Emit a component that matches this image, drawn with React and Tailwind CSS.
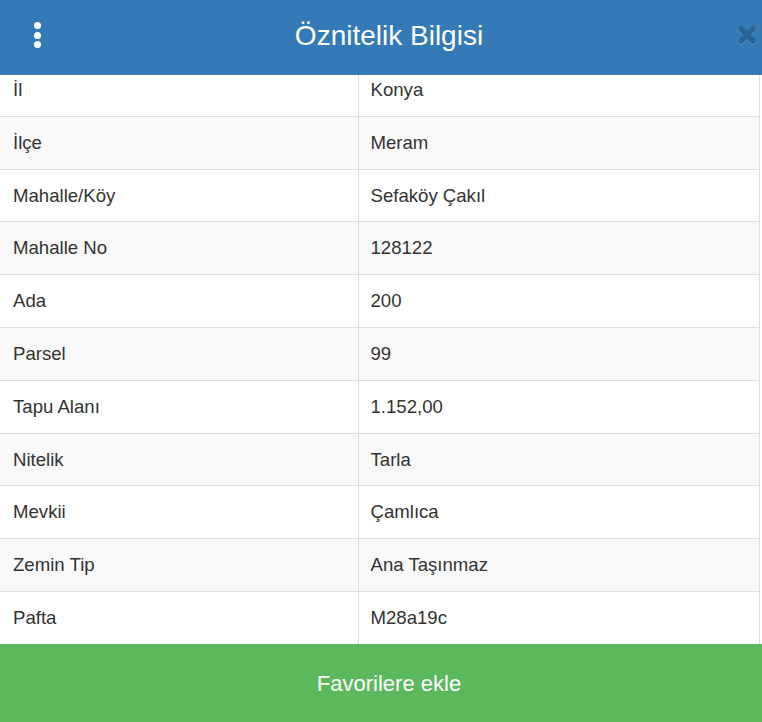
import React from 'react';

const rows = [
  ['İl', 'Konya'],
  ['İlçe', 'Meram'],
  ['Mahalle/Köy', 'Sefaköy Çakıl'],
  ['Mahalle No', '128122'],
  ['Ada', '200'],
  ['Parsel', '99'],
  ['Tapu Alanı', '1.152,00'],
  ['Nitelik', 'Tarla'],
  ['Mevkii', 'Çamlıca'],
  ['Zemin Tip', 'Ana Taşınmaz'],
  ['Pafta', 'M28a19c'],
];

const App = () => {
  return (
    <div className="w-[762px] h-[722px] flex flex-col bg-white text-[#333] font-['Liberation_Sans',Arial,sans-serif] overflow-hidden">
      <header className="relative h-[75px] shrink-0 bg-[#337ab7] flex items-center justify-center">
        <button className="absolute left-[34px] top-[22px] flex flex-col gap-[2.5px]">
          <span className="block w-[7px] h-[7px] rounded-full bg-white" />
          <span className="block w-[7px] h-[7px] rounded-full bg-white" />
          <span className="block w-[7px] h-[7px] rounded-full bg-white" />
        </button>
        <h1 className="text-white text-[28px] leading-none pl-[16px] pb-[4px]">Öznitelik Bilgisi</h1>
        <button className="absolute left-[736px] top-[24px]">
          <svg width="22" height="22" viewBox="0 0 22 22">
            <path d="M5 5 L17 17 M17 5 L5 17" stroke="#7ea9d4" strokeWidth="5.5" strokeLinecap="round" transform="translate(0 1)" opacity="0.5" />
            <path d="M5 5 L17 17 M17 5 L5 17" stroke="#2a6496" strokeWidth="5.5" strokeLinecap="round" />
          </svg>
        </button>
      </header>

      <div className="flex-1 overflow-hidden">
        <table className="w-[760px] border-collapse text-[18.6px] leading-[21.8px]">
          <tbody>
            {rows.map(([label, value], i) => (
              <tr key={label} className={i % 2 === 1 ? 'bg-[#f9f9f9]' : 'bg-white'}>
                <td className={`w-[358px] px-[13px] border-b border-[#ddd] ${i === 0 ? 'pt-[4px] pb-[15px]' : 'py-[15px]'}`}>
                  {label}
                </td>
                <td className={`px-[12px] border-b border-l border-r border-[#ddd] ${i === 0 ? 'pt-[4px] pb-[15px]' : 'py-[15px]'}`}>
                  {value}
                </td>
              </tr>
            ))}
          </tbody>
        </table>
      </div>

      <button className="h-[78px] shrink-0 bg-[#5cb85c] text-white text-[22px] flex items-center justify-center pl-[16px]">
        Favorilere ekle
      </button>
    </div>
  );
};

export default App;
